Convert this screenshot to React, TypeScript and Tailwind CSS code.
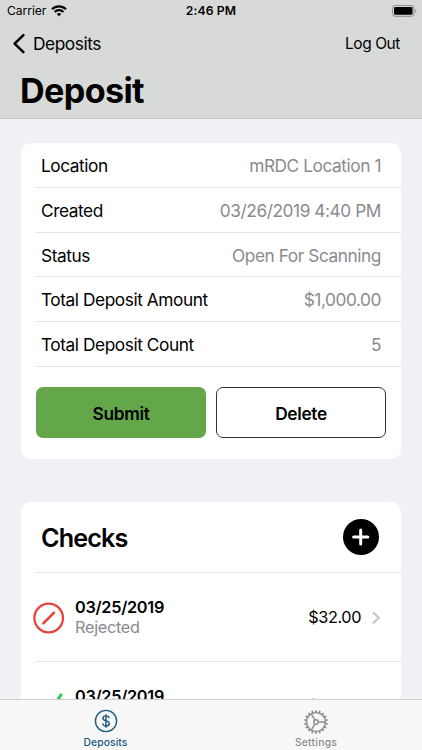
import React from 'react';

const details = [
  { label: 'Location', value: 'mRDC Location 1' },
  { label: 'Created', value: '03/26/2019 4:40 PM' },
  { label: 'Status', value: 'Open For Scanning' },
  { label: 'Total Deposit Amount', value: '$1,000.00' },
  { label: 'Total Deposit Count', value: '5' },
];

function WifiIcon() {
  return (
    <svg width="16" height="12" viewBox="0 0 16 12" fill="none" stroke="black" strokeWidth="2.2">
      <path d="M1 4.3C5 .3 11 .3 15 4.3" />
      <path d="M3.6 7C6 4.6 10 4.6 12.4 7" />
      <path d="M5.7 8.9C7 7.7 9 7.7 10.3 8.9L8 11.2Z" fill="black" stroke="none" />
    </svg>
  );
}

function BatteryIcon() {
  return (
    <svg width="26" height="12" viewBox="0 0 26 12">
      <rect x="0.5" y="0.5" width="21.5" height="10.8" rx="2.8" fill="none" stroke="#8b8c8b" />
      <rect x="2" y="2" width="18.5" height="7.8" rx="1.4" fill="black" />
      <path d="M23.3 4.1C24.6 4.6 24.6 7.2 23.3 7.7Z" fill="#8b8c8b" />
    </svg>
  );
}

function RejectedIcon() {
  return (
    <svg width="32" height="32" viewBox="0 0 32 32" fill="none" stroke="#e9403a" strokeWidth="2.2">
      <circle cx="15.7" cy="16" r="14.3" />
      <path d="M10.3 21.3L21.1 10.6" strokeWidth="2.5" strokeLinecap="round" />
    </svg>
  );
}

function AcceptedIcon() {
  return (
    <svg width="32" height="32" viewBox="0 0 32 32" fill="none" stroke="#34c759" strokeWidth="3" strokeLinecap="round" strokeLinejoin="round">
      <path d="M9.5 17L16 23L28 3.8" />
    </svg>
  );
}

function GearIcon() {
  const teeth = Array.from({ length: 18 }, (_, i) => i * 20);
  return (
    <svg width="26" height="26" viewBox="0 0 26 26" fill="none" stroke="#8b8b8d" strokeWidth="1.4">
      <circle cx="13" cy="13" r="9.4" />
      <circle cx="13" cy="13" r="2.2" />
      <path d="M15.2 13H22.4M11.9 11.1L8.3 4.9M11.9 14.9L8.3 21.1" />
      {teeth.map((angle) => (
        <path key={angle} d="M13 1.2V3.4" strokeWidth="1.8" transform={`rotate(${angle} 13 13)`} />
      ))}
    </svg>
  );
}

function Header() {
  return (
    <header className="h-[119px] shrink-0 bg-[#d8dad9] border-b border-[#c6c7c9]">
      <div className="grid grid-cols-3 items-center h-[22px] px-[7px] text-[12.2px]">
        <div className="flex items-center gap-[5px]">
          <span className="-tracking-[0.1px]">Carrier</span>
          <WifiIcon />
        </div>
        <span className="text-center font-semibold tracking-[0.1px]">2:46 PM</span>
        <div className="flex justify-end -mr-[3px]">
          <BatteryIcon />
        </div>
      </div>
      <div className="flex items-center justify-between h-[43px] pl-3 pr-[22px]">
        <button className="flex items-center gap-[7px] text-[17.3px] tracking-[-0.43px]">
          <svg width="14" height="22" viewBox="0 0 14 22" fill="none" stroke="black" strokeWidth="2.6" strokeLinecap="round" strokeLinejoin="round">
            <path d="M11.4 2.1L2.6 10.6L11.4 19.1" />
          </svg>
          Deposits
        </button>
        <button className="text-[15.5px] tracking-[-0.43px]">Log Out</button>
      </div>
      <h1 className="pt-px pl-5 text-[34.2px] leading-[50px] font-bold tracking-[-0.65px]">Deposit</h1>
    </header>
  );
}

function DetailsCard() {
  return (
    <section className="h-[316px] shrink-0 rounded-[10px] bg-white">
      {details.map((item) => (
        <div key={item.label} className="ml-[15px] h-[44.8px] flex items-center justify-between pt-0.5 pl-[5px] pr-5 border-b border-[#e4e4e6] text-[17.3px] tracking-[-0.44px]">
          <span>{item.label}</span>
          <span className="text-[#8a8a8e]">{item.value}</span>
        </div>
      ))}
      <div className="flex gap-[10px] px-[15px] pt-5 text-[17.3px] font-semibold tracking-[-0.32px]">
        <button className="w-[170px] h-[51.5px] pt-0.5 rounded-[7px] bg-[#64a74b]">Submit</button>
        <button className="w-[170px] h-[51.5px] pt-0.5 rounded-[7px] border border-[#333]">Delete</button>
      </div>
    </section>
  );
}

function CheckRow({ icon, status, amount }: { icon: React.ReactNode; status: string; amount: string }) {
  return (
    <div className="flex items-center h-[89px] ml-3 pr-[19px]">
      {icon}
      <div className="ml-[10px] pb-[2px] flex-1 leading-[20px]">
        <div className="text-[16.3px] font-semibold tracking-[-0.3px]">03/25/2019</div>
        <div className="text-[16.3px] text-[#8a8a8e] tracking-[-0.3px]">{status}</div>
      </div>
      <span className="text-[16.3px] tracking-[-0.42px]">{amount}</span>
      <svg className="ml-[10px]" width="11" height="14" viewBox="0 0 11 14" fill="none" stroke="#c4c4c7" strokeWidth="2">
        <path d="M2 1.2L7.9 6.7L2 12.2" />
      </svg>
    </div>
  );
}

function ChecksCard() {
  return (
    <section className="mt-[43px] shrink-0 rounded-t-[10px] bg-white">
      <div className="ml-[15px] flex items-center justify-between h-[71px] pl-[5px] pr-[22px] border-b border-[#e4e4e6]">
        <h2 className="pt-[3px] text-[25.2px] font-semibold tracking-[-0.9px]">Checks</h2>
        <button className="size-[36px] rounded-full bg-black flex items-center justify-center">
          <svg width="18" height="18" viewBox="0 0 18 18" fill="none" stroke="white" strokeWidth="3" strokeLinecap="round">
            <path d="M8.7 1.9V16.1M1.6 9H15.8" />
          </svg>
        </button>
      </div>
      <CheckRow icon={<RejectedIcon />} status="Rejected" amount="$32.00" />
      <div className="ml-[15px] -mt-px h-px bg-[#e4e4e6]" />
      <CheckRow icon={<AcceptedIcon />} status="Accepted" amount="$32.00" />
    </section>
  );
}

function TabBar() {
  return (
    <nav className="h-[51px] shrink-0 grid grid-cols-2 bg-[#f7f7f8] border-t border-[#cfcfd2] text-[10.3px] font-medium">
      <div className="flex flex-col items-center pt-[9px] text-[#1c5c81]">
        <svg width="24" height="24" viewBox="0 0 24 24" fill="none" stroke="currentColor" strokeWidth="1.4">
          <circle cx="12" cy="12" r="10.6" />
          <path d="M15.1 9.1C14.9 7.6 13.6 6.9 12 6.9C10.2 6.9 8.9 7.8 8.9 9.3C8.9 12.8 15.3 10.9 15.3 14.5C15.3 16.2 13.9 17 12 17C10.1 17 8.8 16.2 8.6 14.5M12 5.2V18.7" />
        </svg>
        <span className="mt-[3px] leading-[13px] tracking-[0.1px]">Deposits</span>
      </div>
      <div className="flex flex-col items-center pt-[9px] pr-px text-[#8b8b8d]">
        <GearIcon />
        <span className="mt-px leading-[13px] tracking-[0.25px]">Settings</span>
      </div>
    </nav>
  );
}

export default function App() {
  return (
    <div className="flex flex-col w-[422px] h-[750px] overflow-hidden bg-[#f1f0f7] font-['Inter',sans-serif] text-black">
      <Header />
      <main className="flex flex-col flex-1 min-h-0 overflow-hidden px-[21px] pt-6">
        <DetailsCard />
        <ChecksCard />
      </main>
      <TabBar />
    </div>
  );
}
